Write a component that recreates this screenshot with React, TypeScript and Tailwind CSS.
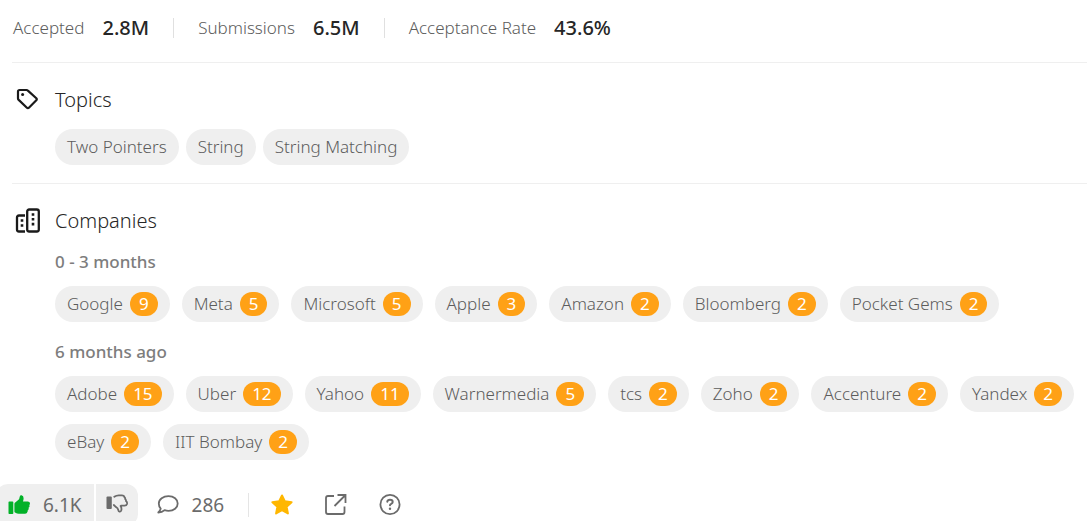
import React from "react";

type Company = { name: string; count: number };

const stats = [
  { label: "Accepted", value: "2.8M" },
  { label: "Submissions", value: "6.5M" },
  { label: "Acceptance Rate", value: "43.6%" },
];

const topics = ["Two Pointers", "String", "String Matching"];

const recent: Company[] = [
  { name: "Google", count: 9 },
  { name: "Meta", count: 5 },
  { name: "Microsoft", count: 5 },
  { name: "Apple", count: 3 },
  { name: "Amazon", count: 2 },
  { name: "Bloomberg", count: 2 },
  { name: "Pocket Gems", count: 2 },
];

const older: Company[] = [
  { name: "Adobe", count: 15 },
  { name: "Uber", count: 12 },
  { name: "Yahoo", count: 11 },
  { name: "Warnermedia", count: 5 },
  { name: "tcs", count: 2 },
  { name: "Zoho", count: 2 },
  { name: "Accenture", count: 2 },
  { name: "Yandex", count: 2 },
  { name: "eBay", count: 2 },
  { name: "IIT Bombay", count: 2 },
];

function TagIcon() {
  return (
    <svg viewBox="0 0 24 24" className="size-6" fill="none" stroke="#1a1a1a" strokeWidth="2.2" strokeLinejoin="round" aria-hidden="true">
      <path d="M3 3.600q0-1.600 1.600-1.600h6.900q.8 0 1.400.6l8.400 7.700q1 1 0 2l-7.400 7.400q-1 1-2 0L3.700 11.900q-.7-.7-.7-1.500z" />
      <circle cx="7.600" cy="6.600" r="1.500" fill="#1a1a1a" stroke="none" />
    </svg>
  );
}

function BuildingsIcon() {
  return (
    <svg viewBox="0 0 26 26" className="size-6.5" fill="none" stroke="#1a1a1a" strokeWidth="2.300" strokeLinejoin="round" aria-hidden="true">
      <rect x="12.200" y="1.500" width="11.600" height="22" rx="2" />
      <path d="M10 7.500H4q-2 0-2 2V21.500q0 2 2 2h6" />
      <path d="M16.700 5.200h2.600v2.600h-2.600zM16.700 10h2.600v2.600h-2.600zM16.700 14.800h2.600v2.600h-2.600zM5.700 11.200h2.600v2.600H5.700zM5.700 16.200h2.600v2.600H5.700z" fill="#1a1a1a" stroke="none" />
    </svg>
  );
}

function ThumbUp() {
  return (
    <svg viewBox="0 0 24 24" className="size-6" fill="#02b128" aria-hidden="true">
      <path d="M2.300 8.500h3.200q.8 0 .8.8v10.900q0 .8-.8.8H2.300q-.8 0-.8-.8V9.300q0-.8.8-.8zM7.400 10.900q0-.7.5-1.100l3.600-3.100q.6-.5.8-1.300l.4-1.700q.4-1.700 1.900-1.400 2 .4 2 3 0 1.400-.6 3.200h4.700q2.300 0 2.300 2 0 1-.8 1.500.5.600.3 1.500t-1 1.300q.4.700.1 1.500t-1 1.100q.2.600-.1 1.300-.5 2.100-2.400 2.100h-6.500q-1.600 0-2.800-.7l-.7-.5q-.7-.4-.7-1.200z" />
    </svg>
  );
}

function ThumbDown() {
  return (
    <svg viewBox="0 0 24 24" className="size-6" fill="none" stroke="#6b6b6b" strokeWidth="1.800" strokeLinejoin="round" strokeLinecap="round" aria-hidden="true">
      <rect x="1.500" y="3.500" width="5.300" height="12.500" rx="1" fill="#6b6b6b" stroke="none" />
      <path d="M9.300 3.800q2-1.500 4.500-1.500h3q2.400 0 2.700 2 .9.700.8 1.900.9.700.7 1.900 1.400 1 1 2.800-.5 1.700-2.400 1.700h-3.200l-.8.500q1.300 2 .7 4.200-.5 1.600-1.900 1.300-.9-.2-1.200-1.700-.4-1.800-1.900-2.600l-2.500-2.300" />
    </svg>
  );
}

function CommentIcon() {
  return (
    <svg viewBox="0 0 24 24" className="size-6" fill="none" stroke="#6b6b6b" strokeWidth="1.800" strokeLinecap="round" strokeLinejoin="round" aria-hidden="true">
      <path d="M12.500 3.200c5.300 0 9.200 3 9.200 7.300s-3.900 7.400-9.200 7.400q-2 0-3.900-.7-2.600 2.300-6.300 2.300 1.800-1.800 2.400-3.800-1.900-2.100-1.900-5.200c0-4.300 4.400-7.300 9.700-7.300z" />
    </svg>
  );
}

function StarIcon() {
  return (
    <svg viewBox="0 0 24 24" className="size-6" fill="#ffb700" stroke="#ffb700" strokeWidth="2" strokeLinejoin="round" aria-hidden="true">
      <path d="m12 2.500 2.800 5.800 6.800.9-5 4.500 1.300 6.800-5.900-3.300-5.900 3.300 1.300-6.800-5-4.500 6.800-.9z" />
    </svg>
  );
}

function ShareIcon() {
  return (
    <svg viewBox="0 0 24 24" className="size-6" fill="none" stroke="#6b6b6b" strokeWidth="1.800" aria-hidden="true">
      <path d="M10 3H4q-2 0-2 2v14q0 2 2 2h14.500q2 0 2-2v-5.500M13.500 2h8v8M21.500 2 10.500 13" />
    </svg>
  );
}

function HelpIcon() {
  return (
    <svg viewBox="0 0 24 24" className="size-6" fill="none" stroke="#6b6b6b" strokeWidth="1.800" strokeLinecap="round" aria-hidden="true">
      <circle cx="12" cy="11.500" r="9.600" />
      <path d="M9.300 8.700q.3-1.900 2.700-1.900 2.700 0 2.700 2.100 0 1.200-1.500 2-1.200.6-1.200 1.400" strokeWidth="2" />
      <circle cx="12" cy="15.700" r="1.200" fill="#6b6b6b" stroke="none" />
    </svg>
  );
}

function CompanyList({ items }: { items: Company[] }) {
  return (
    <ul className="flex flex-wrap gap-3">
      {items.map((c) => (
        <li key={c.name}>
          <a href="#" className="flex h-9 items-center gap-[7px] rounded-full bg-[#efefef] px-3 whitespace-nowrap">
            {c.name}
            <span className="flex h-6 items-center rounded-full bg-[#ffa116] px-[9px] font-normal text-white">{c.count}</span>
          </a>
        </li>
      ))}
    </ul>
  );
}

export default function App() {
  return (
    <main className="h-screen overflow-hidden bg-white font-['Noto_Sans','Open_Sans',sans-serif] text-[17px] leading-6 font-light text-[#5c5c5c]">
      <div className="ml-3">
        <dl className="flex h-[62px] items-center pb-1.5 pl-px">
          {stats.map((s, i) => (
            <div key={s.label} className={i ? "ml-6 flex h-5 items-center gap-[18px] border-l border-[#e0e0e0] pl-6" : "flex h-5 items-center gap-[18px]"}>
              <dt>{s.label}</dt>
              <dd className="text-[20px] leading-6 font-medium text-[#262626]">{s.value}</dd>
            </div>
          ))}
        </dl>

        <section className="border-t border-[#efefef] pt-[23px] pb-[18px]">
          <h2 className="flex items-center gap-4 pl-[3px] text-[20px] leading-7 font-light text-[#262626]">
            <TagIcon />
            Topics
          </h2>
          <ul className="mt-[15px] ml-[43px] flex flex-wrap gap-[7px]">
            {topics.map((t) => (
              <li key={t}>
                <a href="#" className="flex h-9 items-center rounded-full bg-[#efefef] px-3">{t}</a>
              </li>
            ))}
          </ul>
        </section>

        <section className="border-t border-[#efefef] pt-[23px]">
          <h2 className="flex items-center gap-3.5 pl-[3px] text-[20px] leading-7 font-light text-[#262626]">
            <BuildingsIcon />
            Companies
          </h2>
          <div className="mt-[15px] ml-[43px]">
            <h3 className="mb-3 font-medium text-[#7d7d7d]">0 - 3 months</h3>
            <CompanyList items={recent} />
            <h3 className="mt-[18px] mb-3 font-medium text-[#7d7d7d]">6 months ago</h3>
            <CompanyList items={older} />
          </div>
        </section>
      </div>

      <footer className="mt-6 -ml-1 flex h-[42px] items-center text-[19px] font-normal text-[#6b6b6b]">
        <div className="flex h-full gap-0.5 overflow-hidden rounded-xl">
          <button type="button" aria-label="Like" className="flex items-center gap-3 bg-[#efefef] pr-3 pl-[11px]">
            <ThumbUp />
            6.1K
          </button>
          <button type="button" aria-label="Dislike" className="flex items-center bg-[#efefef] px-[9px]">
            <ThumbDown />
          </button>
        </div>
        <button type="button" aria-label="Comments" className="ml-4.5 flex items-center gap-3">
          <CommentIcon />
          286
        </button>
        <div className="ml-6 flex items-center gap-[30px] border-l border-[#e5e5e5] pl-[21px]">
          <button type="button" aria-label="Favorite"><StarIcon /></button>
          <button type="button" aria-label="Share"><ShareIcon /></button>
          <button type="button" aria-label="Help"><HelpIcon /></button>
        </div>
      </footer>
    </main>
  );
}
